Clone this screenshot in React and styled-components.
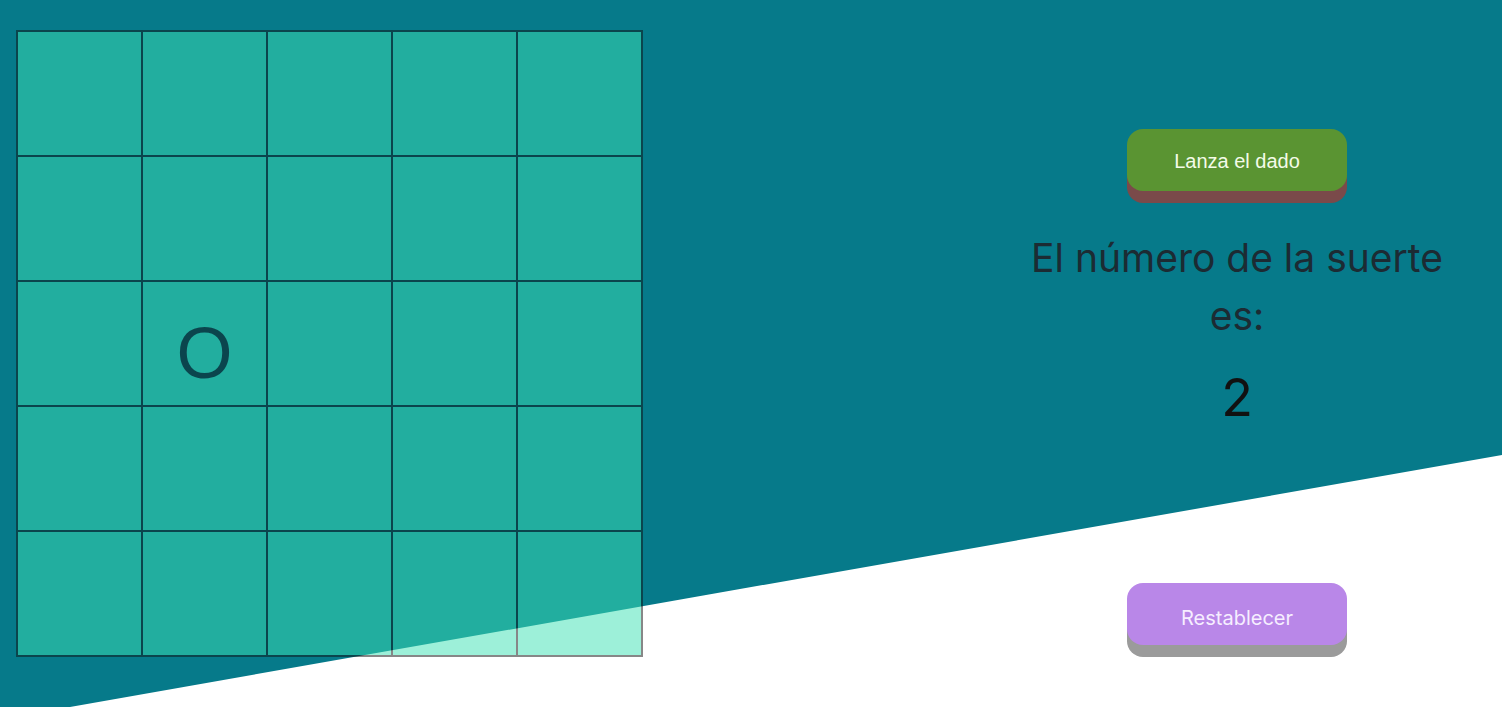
import React, { useState } from 'react';
import styled, { createGlobalStyle } from 'styled-components';

const TEAL = '#067a8a';

const GlobalStyle = createGlobalStyle`
  html, body {
    margin: 0;
    padding: 0;
    background: #ffffff;
    font-family: Inter, "Liberation Sans", sans-serif;
  }
`;

function App() {
  const [piece] = useState({ row: 2, col: 1 });
  const [lucky] = useState(2);

  const cells = [];
  for (let r = 0; r < 5; r++) {
    for (let c = 0; c < 5; c++) {
      cells.push(
        <Cell key={`${r}-${c}`}>
          {piece.row === r && piece.col === c && <Piece>O</Piece>}
        </Cell>
      );
    }
  }

  return (
    <>
      <GlobalStyle />
      <Page>
        <Backdrop />
        <Board>{cells}</Board>
        <Panel>
          <Button color="#5a9432" shade="#7a4a4a" textColor="#f4fbe8">Lanza el dado</Button>
          <Heading>El número de la suerte es:</Heading>
          <Lucky>{lucky}</Lucky>
          <ResetButton color="#b987e8" shade="#9b9b9b" textColor="#f6eeff">Restablecer</ResetButton>
        </Panel>
      </Page>
    </>
  );
}

const Page = styled.div`
  position: relative;
  display: flex;
  justify-content: space-between;
  align-items: flex-start;
  width: 100%;
  height: 707px;
  overflow: hidden;
`;

const Backdrop = styled.div`
  position: absolute;
  inset: 0;
  background: ${TEAL};
  clip-path: polygon(0 0, 100% 0, 100% 455px, 70px 100%, 0 100%);
  z-index: 0;
`;

const Board = styled.div`
  position: relative;
  z-index: 1;
  margin: 31px 0 0 17px;
  display: grid;
  grid-template-columns: repeat(5, 125px);
  grid-template-rows: repeat(5, 125px);
  outline: 1px solid #111;
  outline-offset: 0;
  opacity: 0.5;
`;

const Cell = styled.div`
  box-sizing: border-box;
  background: rgb(62, 226, 180);
  border: 1px solid #111;
  display: flex;
  align-items: center;
  justify-content: center;
`;

const Piece = styled.span`
  font-family: "Liberation Sans", Arial, sans-serif;
  font-size: 72px;
  color: #111;
  line-height: 1;
  margin-top: 18px;
`;

const Panel = styled.div`
  position: relative;
  z-index: 1;
  width: 460px;
  margin: 129px 35px 0 0;
  display: flex;
  flex-direction: column;
  align-items: center;
`;

const Button = styled.button`
  width: 220px;
  height: 62px;
  padding: 2px 0 0;
  border: none;
  border-radius: 16px;
  background: ${p => p.color};
  box-shadow: 0 12px 0 ${p => p.shade};
  color: ${p => p.textColor};
  font-family: "Liberation Sans", Arial, sans-serif;
  font-size: 20px;
  cursor: pointer;
`;

const ResetButton = styled(Button)`
  font-family: Inter, "Liberation Sans", sans-serif;
  padding-top: 8px;
  margin-top: 153px;
`;

const Heading = styled.h2`
  margin: 38px 0 0;
  font-family: Inter, "Liberation Sans", sans-serif;
  font-weight: 400;
  font-size: 39px;
  line-height: 58px;
  color: #1c2b33;
  text-align: center;
`;

const Lucky = styled.div`
  margin-top: 21px;
  font-family: Inter, "Liberation Sans", sans-serif;
  font-size: 52px;
  line-height: 64px;
  color: #111;
`;

export default App;
